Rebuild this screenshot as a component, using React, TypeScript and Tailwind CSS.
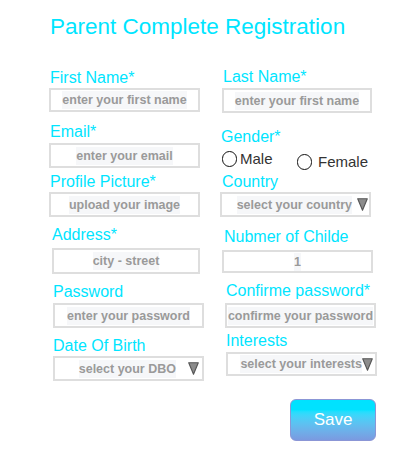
import React from "react";

function Label({ children, cls = "" }: { children: React.ReactNode; cls?: string }) {
  return <div className={`text-[16px] leading-[18px] text-[#00e5ff] whitespace-nowrap ${cls}`}>{children}</div>;
}

function Ph({ children }: { children: React.ReactNode }) {
  return (
    <span className="bg-[#f6f7f9] text-[#9a9a9a] font-bold text-[12.5px] leading-[18px] whitespace-nowrap">
      {children}
    </span>
  );
}

function Box({ children, cls = "" }: { children: React.ReactNode; cls?: string }) {
  return (
    <div className={`border-2 border-[#dedede] flex items-center justify-center overflow-hidden ${cls}`}>
      <Ph>{children}</Ph>
    </div>
  );
}

function Tri() {
  return (
    <svg width="11" height="13" viewBox="0 0 11 13" className="shrink-0">
      <polygon points="0.7,0.7 10.3,0.7 5.5,12.3" fill="#8c8c8c" stroke="#555" strokeWidth="1.1" strokeLinejoin="round" />
    </svg>
  );
}

function Select({ children, cls = "" }: { children: React.ReactNode; cls?: string }) {
  return (
    <div className={`border-2 border-[#dedede] flex items-center justify-end overflow-hidden ${cls}`}>
      <Ph>{children}</Ph>
      <Tri />
    </div>
  );
}

function Radio({ children, cls = "" }: { children: React.ReactNode; cls?: string }) {
  return (
    <div className={`flex items-center ${cls}`}>
      <div className="w-[15px] h-[16px] rounded-full border-[1.5px] border-[#111] bg-white shrink-0" />
      <span className="text-[15px] leading-[18px] text-[#333]">{children}</span>
    </div>
  );
}

export default function App() {
  return (
    <div className="w-[417px] h-[462px] bg-white overflow-hidden font-['Liberation_Sans',Arial,sans-serif]">
      <div className="pt-[14px] pl-[50px] text-[22.5px] leading-[26px] text-[#00e5ff] whitespace-nowrap">
        Parent Complete Registration
      </div>

      {/* Row 1 */}
      <div className="flex mt-[28px]">
        <div className="ml-[49px] w-[173px] flex flex-col">
          <Label cls="mt-[1px] pl-[1px]">First Name*</Label>
          <Box cls="mt-[1px] h-[24px] w-[151px]">enter your first name</Box>
        </div>
        <div className="flex flex-col">
          <Label cls="pl-[1px]">Last Name*</Label>
          <Box cls="mt-[2px] h-[25px] w-[150px]">enter your first name</Box>
        </div>
      </div>

      {/* Row 2 */}
      <div className="flex mt-[10px]">
        <div className="ml-[49px] w-[172px] flex flex-col">
          <Label cls="pl-[1px]">Email*</Label>
          <Box cls="mt-[2px] h-[25px] w-[151px]">enter your email</Box>
        </div>
        <div className="flex flex-col">
          <Label cls="mt-[5px]">Gender*</Label>
          <div className="flex items-start mt-[4px]">
            <Radio cls="ml-[1px] w-[75px] gap-[3px]">Male</Radio>
            <Radio cls="mt-[3px] gap-[6px]">Female</Radio>
          </div>
        </div>
      </div>

      {/* Row 3 */}
      <div className="flex mt-[2px]">
        <div className="ml-[49px] w-[171px] flex flex-col">
          <Label cls="pl-[1px]">Profile Picture*</Label>
          <Box cls="mt-[1px] h-[25px] w-[151px]">upload your image</Box>
        </div>
        <div className="flex flex-col">
          <Label cls="pl-[2px]">Country</Label>
          <Select cls="mt-[1px] h-[25px] w-[151px] pr-[1px] gap-[5px]">select your country</Select>
        </div>
      </div>

      {/* Row 4 */}
      <div className="flex mt-[9px]">
        <div className="ml-[52px] w-[170px] flex flex-col">
          <Label>Address*</Label>
          <Box cls="mt-[4px] h-[26px] w-[148px]">city - street</Box>
        </div>
        <div className="flex flex-col">
          <Label cls="mt-[2px] pl-[2px]">Nubmer of Childe</Label>
          <Box cls="mt-[4px] h-[23px] w-[151px]">1</Box>
        </div>
      </div>

      {/* Row 5 */}
      <div className="flex mt-[8px]">
        <div className="ml-[53px] w-[172px] flex flex-col">
          <Label cls="mt-[1px]">Password</Label>
          <Box cls="mt-[2px] h-[25px] w-[151px]">enter your password</Box>
        </div>
        <div className="flex flex-col">
          <Label cls="pl-[1px]">Confirme password*</Label>
          <Box cls="mt-[3px] h-[25px] w-[151px]">confirme your password</Box>
        </div>
      </div>

      {/* Row 6 */}
      <div className="flex mt-[4px]">
        <div className="ml-[53px] w-[173px] flex flex-col">
          <Label cls="mt-[5px]">Date Of Birth</Label>
          <Select cls="mt-[1px] h-[25px] w-[151px] pr-[3px] gap-[12px]">select your DBO</Select>
        </div>
        <div className="flex flex-col">
          <Label>Interests</Label>
          <Select cls="mt-[2px] h-[24px] w-[151px] pr-[2px]">select your interests</Select>
        </div>
      </div>

      <div className="mt-[18px] ml-[290px]">
        <button className="w-[86px] h-[42px] rounded-[6px] border border-[#8b96d6] bg-gradient-to-b from-[#00e2ff] from-[25%] to-[#7a9ae0] text-white text-[17px] leading-[20px] flex items-center justify-center">
          Save
        </button>
      </div>
    </div>
  );
}
